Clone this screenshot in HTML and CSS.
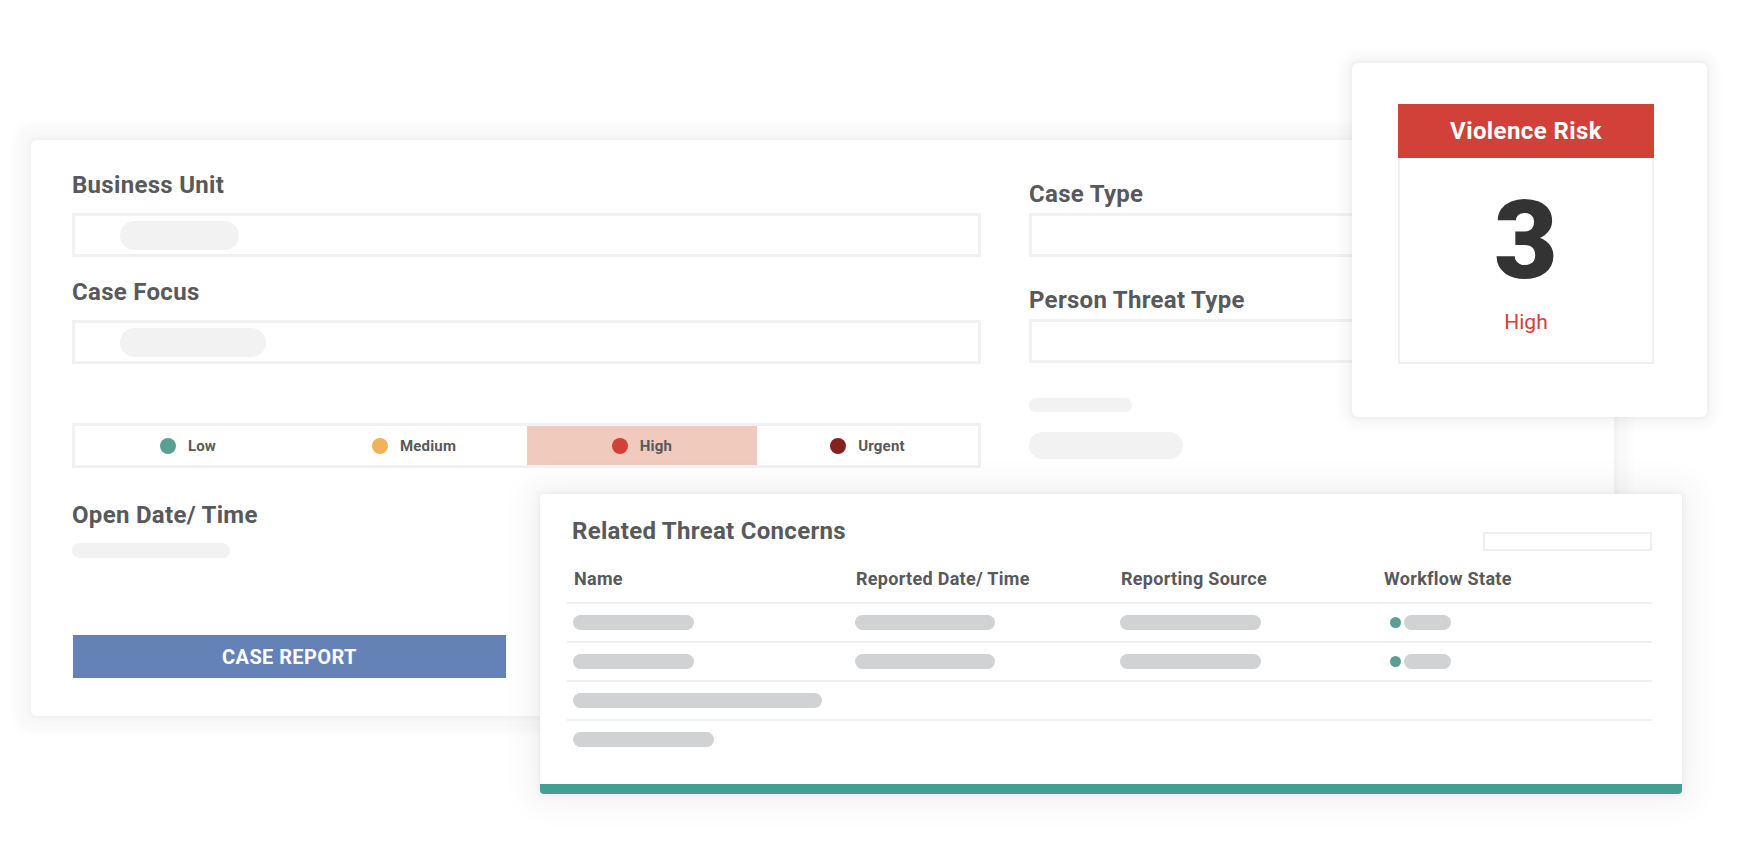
FILE: index.html
```html
<!DOCTYPE html>
<html lang="en">
<head>
    <meta charset="UTF-8">
    <meta name="viewport" content="width=device-width, initial-scale=1.0">
    <title>Case Overview</title>
    <link rel="stylesheet" href="styles.css">
</head>
<body>
    <div class="stage">

        <!-- Main case form -->
        <section class="case-card">
            <div class="col col-left">
                <h3 class="field-label">Business Unit</h3>
                <div class="field"><span class="pill pill-sm"></span></div>

                <h3 class="field-label">Case Focus</h3>
                <div class="field"><span class="pill pill-md"></span></div>

                <div class="priority">
                    <div class="level"><span class="dot dot-low"></span>Low</div>
                    <div class="level"><span class="dot dot-medium"></span>Medium</div>
                    <div class="level active"><span class="dot dot-high"></span>High</div>
                    <div class="level"><span class="dot dot-urgent"></span>Urgent</div>
                </div>

                <h3 class="field-label label-date">Open Date/ Time</h3>
                <div class="bar bar-date"></div>

                <button class="report-btn">CASE REPORT</button>
            </div>

            <div class="col col-right">
                <h3 class="field-label">Case Type</h3>
                <div class="field"></div>

                <h3 class="field-label">Person Threat Type</h3>
                <div class="field"></div>

                <div class="bar bar-short"></div>
                <div class="bar bar-wide"></div>
            </div>
        </section>

        <!-- Risk score card -->
        <aside class="risk-card">
            <div class="risk-box">
                <div class="risk-head">Violence Risk</div>
                <div class="risk-score">3</div>
                <div class="risk-level">High</div>
            </div>
        </aside>

        <!-- Related threats table -->
        <section class="threats-card">
            <div class="threats-head">
                <h3 class="threats-title">Related Threat Concerns</h3>
                <div class="search-box"></div>
            </div>

            <div class="table">
                <div class="row row-head">
                    <div class="cell">Name</div>
                    <div class="cell">Reported Date/ Time</div>
                    <div class="cell">Reporting Source</div>
                    <div class="cell">Workflow State</div>
                </div>
                <div class="row">
                    <div class="cell"><span class="sk sk-name"></span></div>
                    <div class="cell"><span class="sk sk-date"></span></div>
                    <div class="cell"><span class="sk sk-source"></span></div>
                    <div class="cell state"><span class="state-dot"></span><span class="sk sk-state"></span></div>
                </div>
                <div class="row">
                    <div class="cell"><span class="sk sk-name"></span></div>
                    <div class="cell"><span class="sk sk-date"></span></div>
                    <div class="cell"><span class="sk sk-source"></span></div>
                    <div class="cell state"><span class="state-dot"></span><span class="sk sk-state"></span></div>
                </div>
                <div class="row">
                    <div class="cell cell-span"><span class="sk sk-long"></span></div>
                </div>
                <div class="row row-last">
                    <div class="cell cell-span"><span class="sk sk-mid"></span></div>
                </div>
            </div>
        </section>

    </div>
</body>
</html>
```

FILE: styles.css
```css
/* Base */
html, body {
    margin: 0;
    padding: 0;
    background: #fff;
}

body {
    font-family: Roboto, "Liberation Sans", Arial, sans-serif;
    color: #58595b;
    overflow: hidden;
}

.stage {
    position: relative;
    width: 1740px;
    height: 856px;
    padding-top: 140px;
    box-sizing: border-box;
}

/* Main case card */
.case-card {
    margin-left: 31px;
    width: 1583px;
    height: 576px;
    box-sizing: border-box;
    padding: 31px 41px 0 41px;
    display: flex;
    gap: 48px;
    background: #fff;
    border-radius: 6px;
    box-shadow: 0 0 6px 1px rgba(0, 0, 0, 0.04), 0 0 10px 16px rgba(0, 0, 0, 0.028);
}

.col {
    display: flex;
    flex-direction: column;
    align-items: flex-start;
}

.col-left {
    width: 909px;
}

.col-right {
    flex: 1;
    padding-top: 9px;
}

.field-label {
    margin: 0 0 14px 0;
    font-size: 24px;
    line-height: 28px;
    font-weight: 700;
    color: #58595b;
    letter-spacing: 0.3px;
}

.field {
    width: 100%;
    height: 44px;
    box-sizing: border-box;
    border: 3px solid #f1f1f1;
    margin-bottom: 21px;
    display: flex;
    align-items: center;
    padding-left: 45px;
}

.col-right .field-label {
    margin-bottom: 5px;
}

.col-right .field {
    margin-bottom: 29px;
}

.pill {
    height: 29px;
    border-radius: 15px;
    background: #f2f2f2;
}

.pill-sm { width: 119px; }
.pill-md { width: 146px; }

/* Priority selector */
.priority {
    width: 100%;
    height: 45px;
    box-sizing: border-box;
    border: 3px solid #f1f1f1;
    margin-top: 38px;
    display: grid;
    grid-template-columns: 226px 226px 230px 1fr;
}

.level {
    display: flex;
    align-items: center;
    justify-content: center;
    gap: 12px;
    font-size: 15px;
    font-weight: 700;
    color: #58595b;
    letter-spacing: 0.2px;
}

.level.active {
    background: #f0cabd;
}

.dot {
    width: 16px;
    height: 16px;
    border-radius: 50%;
}

.dot-low { background: #5b9f94; }
.dot-medium { background: #f0b359; }
.dot-high { background: #d2403a; }
.dot-urgent { background: #85221f; }

.label-date {
    margin-top: 33px;
}

.bar {
    background: #f2f2f2;
    border-radius: 8px;
}

.bar-date {
    width: 158px;
    height: 15px;
}

.bar-short {
    width: 103px;
    height: 14px;
    margin-top: 6px;
}

.bar-wide {
    width: 154px;
    height: 27px;
    border-radius: 14px;
    margin-top: 20px;
}

.report-btn {
    margin: 77px 0 0 1px;
    width: 433px;
    height: 43px;
    border: none;
    background: #6482b6;
    color: #fff;
    font-family: Roboto, "Liberation Sans", Arial, sans-serif;
    font-size: 20px;
    font-weight: 700;
    letter-spacing: 0.4px;
    cursor: pointer;
}

/* Violence risk card */
.risk-card {
    position: absolute;
    left: 1352px;
    top: 63px;
    width: 355px;
    height: 354px;
    box-sizing: border-box;
    padding: 41px 0 0 46px;
    background: #fff;
    border-radius: 6px;
    box-shadow: 0 0 5px 1px rgba(0, 0, 0, 0.06), 0 0 10px 10px rgba(0, 0, 0, 0.03);
}

.risk-box {
    width: 256px;
    height: 260px;
    box-sizing: border-box;
    border: 2px solid #efefef;
    text-align: center;
}

.risk-head {
    margin: -2px -2px 0 -2px;
    height: 54px;
    line-height: 54px;
    background: #d2403a;
    color: #fff;
    font-size: 24px;
    font-weight: 700;
    letter-spacing: 0.4px;
}

.risk-score {
    margin-top: 28px;
    font-size: 110px;
    line-height: 110px;
    font-weight: 900;
    color: #333;
}

.risk-level {
    margin-top: 13px;
    font-size: 21px;
    line-height: 26px;
    color: #d2403a;
}

/* Related threats card */
.threats-card {
    position: absolute;
    left: 540px;
    top: 494px;
    width: 1142px;
    height: 300px;
    box-sizing: border-box;
    padding: 23px 30px 0 27px;
    background: #fff;
    border-bottom: 10px solid #42a093;
    border-radius: 4px;
    box-shadow: 0 0 6px 1px rgba(0, 0, 0, 0.05), 0 0 30px 12px rgba(0, 0, 0, 0.05);
}

.threats-head {
    display: flex;
    justify-content: space-between;
    align-items: flex-start;
}

.threats-title {
    margin: 0;
    padding-left: 5px;
    font-size: 24px;
    line-height: 28px;
    font-weight: 700;
    color: #58595b;
    letter-spacing: 0.3px;
}

.search-box {
    width: 169px;
    height: 19px;
    box-sizing: border-box;
    border: 2px solid #efefef;
    margin-top: 15px;
}

.table {
    margin-top: 17px;
}

.row {
    display: grid;
    grid-template-columns: 282px 265px 263px 1fr;
    align-items: center;
    height: 37px;
    border-bottom: 2px solid #f0f0f0;
}

.row-head {
    height: auto;
    padding-bottom: 12px;
    font-size: 18px;
    line-height: 22px;
    font-weight: 700;
    color: #58595b;
    letter-spacing: 0.3px;
}

.row-head .cell {
    padding-left: 7px;
}

.row-last {
    border-bottom: none;
}

.cell {
    padding-left: 6px;
    display: flex;
    align-items: center;
}

.cell-span {
    grid-column: 1 / -1;
}

.sk {
    display: block;
    height: 15px;
    border-radius: 8px;
    background: #d1d2d4;
}

.sk-name { width: 121px; }
.sk-date { width: 140px; }
.sk-source { width: 141px; }
.sk-long { width: 249px; }
.sk-mid { width: 141px; }
.sk-state { width: 47px; }

.state-dot {
    width: 11px;
    height: 11px;
    border-radius: 50%;
    background: #5b9f94;
    margin: 0 3px 0 7px;
}
```
